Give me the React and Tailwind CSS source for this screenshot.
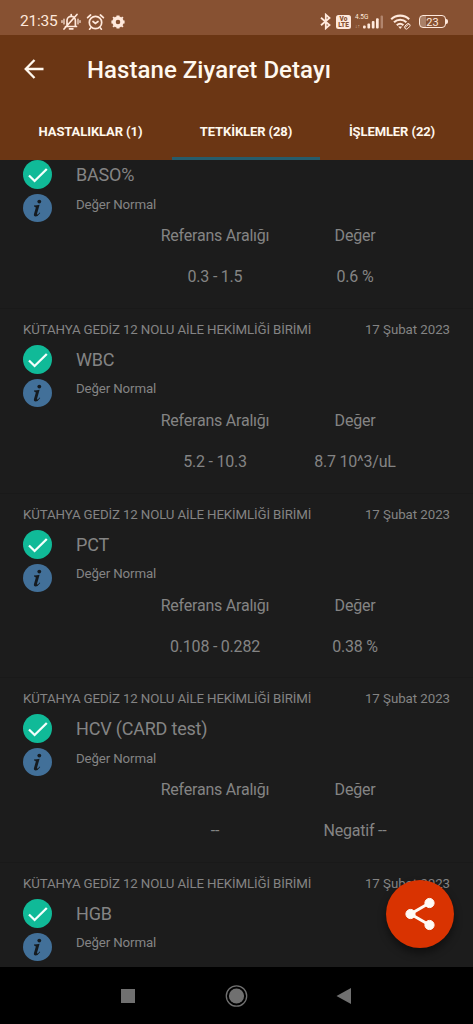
import React from "react";

const birim = "KÜTAHYA GEDİZ 12 NOLU AİLE HEKİMLİĞİ BİRİMİ";
const tarih = "17 Şubat 2023";

const tetkikler = [
  { ad: "BASO%", referans: "0.3 - 1.5", deger: "0.6 %" },
  { ad: "WBC", referans: "5.2 - 10.3", deger: "8.7 10^3/uL" },
  { ad: "PCT", referans: "0.108 - 0.282", deger: "0.38 %" },
  { ad: "HCV (CARD test)", referans: "--", deger: "Negatif --" },
  { ad: "HGB" },
];

function StatusBar() {
  return (
    <div className="h-[35px] shrink-0 bg-[#875132] text-[#ffe9dc] flex items-center justify-between pl-[20px] pr-[25px] pt-[8px]">
      <div className="flex items-center">
        <span className="text-[15.5px] leading-none w-[41px] pt-[1px] whitespace-nowrap tracking-[-0.2px]">21:35</span>
        <svg width="20" height="18" viewBox="0 0 20 18" fill="none" stroke="currentColor" strokeWidth="1.7" strokeLinecap="round">
          <path d="M4.500 13.500h11M6 13V7.500a4.200 4.200 0 0 1 8.400 0V13M8.500 15.800h3.400M10.200 3V1.600M3 16 16 1.500" />
          <path d="M3 6v5M1 7.500v2M17 6v5M19 7.500v2" strokeWidth="1.2" />
        </svg>
        <svg className="ml-[5px]" width="19" height="18" viewBox="0 0 19 18" fill="none" stroke="currentColor" strokeWidth="1.7" strokeLinecap="round">
          <circle cx="9.5" cy="9.5" r="6.2" />
          <path d="M7 8.500l2.400 2L12 8.500M1.600 4.600 4.600 2M17.400 4.600 14.400 2M4.600 15 3.600 16.200M14.400 15l1 1.200" />
        </svg>
        <svg className="ml-[6px]" width="14" height="14" viewBox="0 0 14 14" fill="none" stroke="currentColor">
          <circle cx="7" cy="7" r="4" strokeWidth="3.4" />
          <path d="M5.500 1.200h3M5.500 12.800h3M1.200 5.500v3M12.800 5.500v3M2 3.400 3.400 2M10.600 2 12 3.400M2 10.600 3.400 12M10.600 12l1.400-1.400" strokeWidth="1.600" />
        </svg>
      </div>
      <div className="flex items-center">
        <svg width="12" height="17" viewBox="0 0 12 17" fill="none" stroke="currentColor" strokeWidth="1.8">
          <path d="M1 4.800 9.500 12 5.800 15.300V1.700L9.500 5 1 12.200" />
        </svg>
        <span className="ml-[4px] w-[15px] h-[14px] rounded-[2.5px] bg-[#ffe9dc] text-[#875132] text-[6.5px] leading-[6px] font-black flex flex-col items-center justify-center">
          <span>Vo</span>
          <span>LTE</span>
        </span>
        <span className="ml-[4px] w-[15px] h-[16px] text-[6.5px] leading-[7px] whitespace-nowrap flex flex-col justify-between">
          <span>4.5G</span>
          <span className="text-[5px] opacity-60">↓↑</span>
        </span>
        <svg className="-ml-[7px]" width="22" height="14" viewBox="0 0 22 14" fill="currentColor">
          <rect x="0" y="10.5" width="2.7" height="3" rx="1" />
          <rect x="4.4" y="8.5" width="2.7" height="5" rx="1" />
          <rect x="8.8" y="6" width="2.7" height="7.5" rx="1" />
          <rect x="13" y="3.3" width="2.7" height="10.2" rx="1" />
          <rect x="17.6" y="0.5" width="2.4" height="13" rx="1" opacity=".35" />
        </svg>
        <svg className="ml-[5px]" width="23" height="17" viewBox="0 0 23 17" fill="none" stroke="currentColor" strokeWidth="2.1">
          <path d="M1.200 6.200a13 13 0 0 1 18 0M4 9.200a9 9 0 0 1 12.400 0M6.800 12.200a5 5 0 0 1 6.600 0" />
          <path d="M8.200 13.500 10.200 16l2-2.500z" fill="currentColor" stroke="none" />
          <path d="m15.200 14.400 3.600-3.400M15 13l1.800-1.800a1.800 1.800 0 0 1 2.800 2.400l-1.800 1.800a1.700 1.700 0 0 1-2.800-2.400" strokeWidth="1" />
        </svg>
        <span className="ml-[6px] w-[27px] h-[13px] rounded-[4px] border-[1.5px] border-[#ffe9dc] text-[11px] leading-none pt-[1px] flex items-center justify-center bg-linear-to-r from-[#a98067] from-25% to-transparent to-25%">
          23
        </span>
        <span className="w-[2px] h-[5px] rounded-r-sm bg-[#ffe9dc]"></span>
      </div>
    </div>
  );
}

function TetkikCard({ ad, referans, deger }) {
  return (
    <div className="h-[184.67px] shrink-0 border-b border-[#191919] px-[23px] text-[#848484] whitespace-nowrap">
      <div className="h-[36px] pt-[11px] flex justify-between text-[13.3px] leading-[20px]">
        <span className="tracking-[-0.14px]">{birim}</span>
        <span className="tracking-[-0.05px]">{tarih}</span>
      </div>
      <div className="flex h-[64px]">
        <div className="w-[53px] flex flex-col gap-[5px]">
          <svg width="29" height="29" viewBox="0 0 29 29">
            <circle cx="14.5" cy="14.5" r="14.5" fill="#10ba98" />
            <path d="m6 15.500 5.600 5.500L23.800 9" fill="none" stroke="#f4fffc" strokeWidth="2.3" />
          </svg>
          <svg width="29" height="28" viewBox="0 0 29 28">
            <ellipse cx="14.5" cy="14" rx="14.5" ry="14" fill="#427099" />
            <circle cx="16.3" cy="7.6" r="1.9" fill="#151b20" />
            <path d="M11 11.600q3-.2 5.600-.9l-2.500 8.700q-.3 1.200.3 1.200.8 0 2.200-2l.6.4q-2.200 3.400-4.600 3.400-2.200 0-1.600-2.400l1.700-6.100q.4-1.500-1.700-1.500z" fill="#151b20" />
          </svg>
        </div>
        <div>
          <p className="text-[18px] leading-[30px] tracking-[-0.2px]">{ad}</p>
          <p className="text-[13.3px] leading-[20px] tracking-[-0.14px] mt-[4.3px]">Değer Normal</p>
        </div>
      </div>
      {referans && (
        <div className="ml-[122px] w-[280px] grid grid-cols-2 text-center text-[16px] tracking-[-0.22px] leading-[24px]">
          <span>Referans Aralığı</span>
          <span>Değer</span>
          <span className="mt-[17px]">{referans}</span>
          <span className="mt-[17px]">{deger}</span>
        </div>
      )}
    </div>
  );
}

function App() {
  return (
    <div className="relative w-[473px] h-[1024px] bg-[#1c1c1c] flex flex-col overflow-hidden font-[Roboto,sans-serif]">
      <StatusBar />
      <header className="h-[125px] shrink-0 bg-[#6b3614] text-[#fff8ee] flex flex-col">
        <div className="h-[70px] flex items-center pl-[24px]">
          <svg className="mb-[2px]" width="20" height="20" viewBox="0 0 20 20" fill="none" stroke="currentColor" strokeWidth="2.3">
            <path d="M19.500 10H2M10.500 1 1.700 10l8.800 9" />
          </svg>
          <h1 className="ml-[43px] text-[24px] font-medium leading-[30px] tracking-[0.05px]">Hastane Ziyaret Detayı</h1>
        </div>
        <nav className="flex-1 flex text-[13px] font-bold text-center whitespace-nowrap tracking-[-0.1px]">
          <span className="w-[172px] pl-[9px] pt-[17px]">HASTALIKLAR (1)</span>
          <span className="w-[148px] pt-[17px] border-b-[3px] border-[#265c6b]">TETKİKLER (28)</span>
          <span className="w-[153px] pr-[9px] pt-[17px]">İŞLEMLER (22)</span>
        </nav>
      </header>
      <main className="h-[807px] shrink-0 overflow-hidden">
        <div className="-mt-[35.6px] flex flex-col">
          {tetkikler.map((t) => (
            <TetkikCard key={t.ad} {...t} />
          ))}
        </div>
      </main>
      <button className="absolute left-[386px] top-[880px] w-[68px] h-[68px] rounded-full bg-[#d93301] flex items-center justify-center shadow-[0_5px_9px_rgba(0,0,0,0.45)]">
        <svg width="32" height="34" viewBox="0 0 32 34" fill="#fffaf5" stroke="#fffaf5">
          <path d="M25.500 6 6.500 17l19 11" fill="none" strokeWidth="3" />
          <circle cx="25.500" cy="6" r="4.600" />
          <circle cx="6.500" cy="17" r="4.600" />
          <circle cx="25.500" cy="28" r="4.600" />
        </svg>
      </button>
      <footer className="h-[57px] shrink-0 bg-black">
        <svg width="473" height="57" viewBox="0 0 473 57" fill="#707070">
          <rect x="121" y="22" width="14" height="14" />
          <circle cx="236.500" cy="29" r="7.600" />
          <circle cx="236.500" cy="29" r="10.200" fill="none" stroke="#707070" strokeWidth="1.300" />
          <path d="M351 21v16l-14.500-8z" />
        </svg>
      </footer>
    </div>
  );
}

export default App;
